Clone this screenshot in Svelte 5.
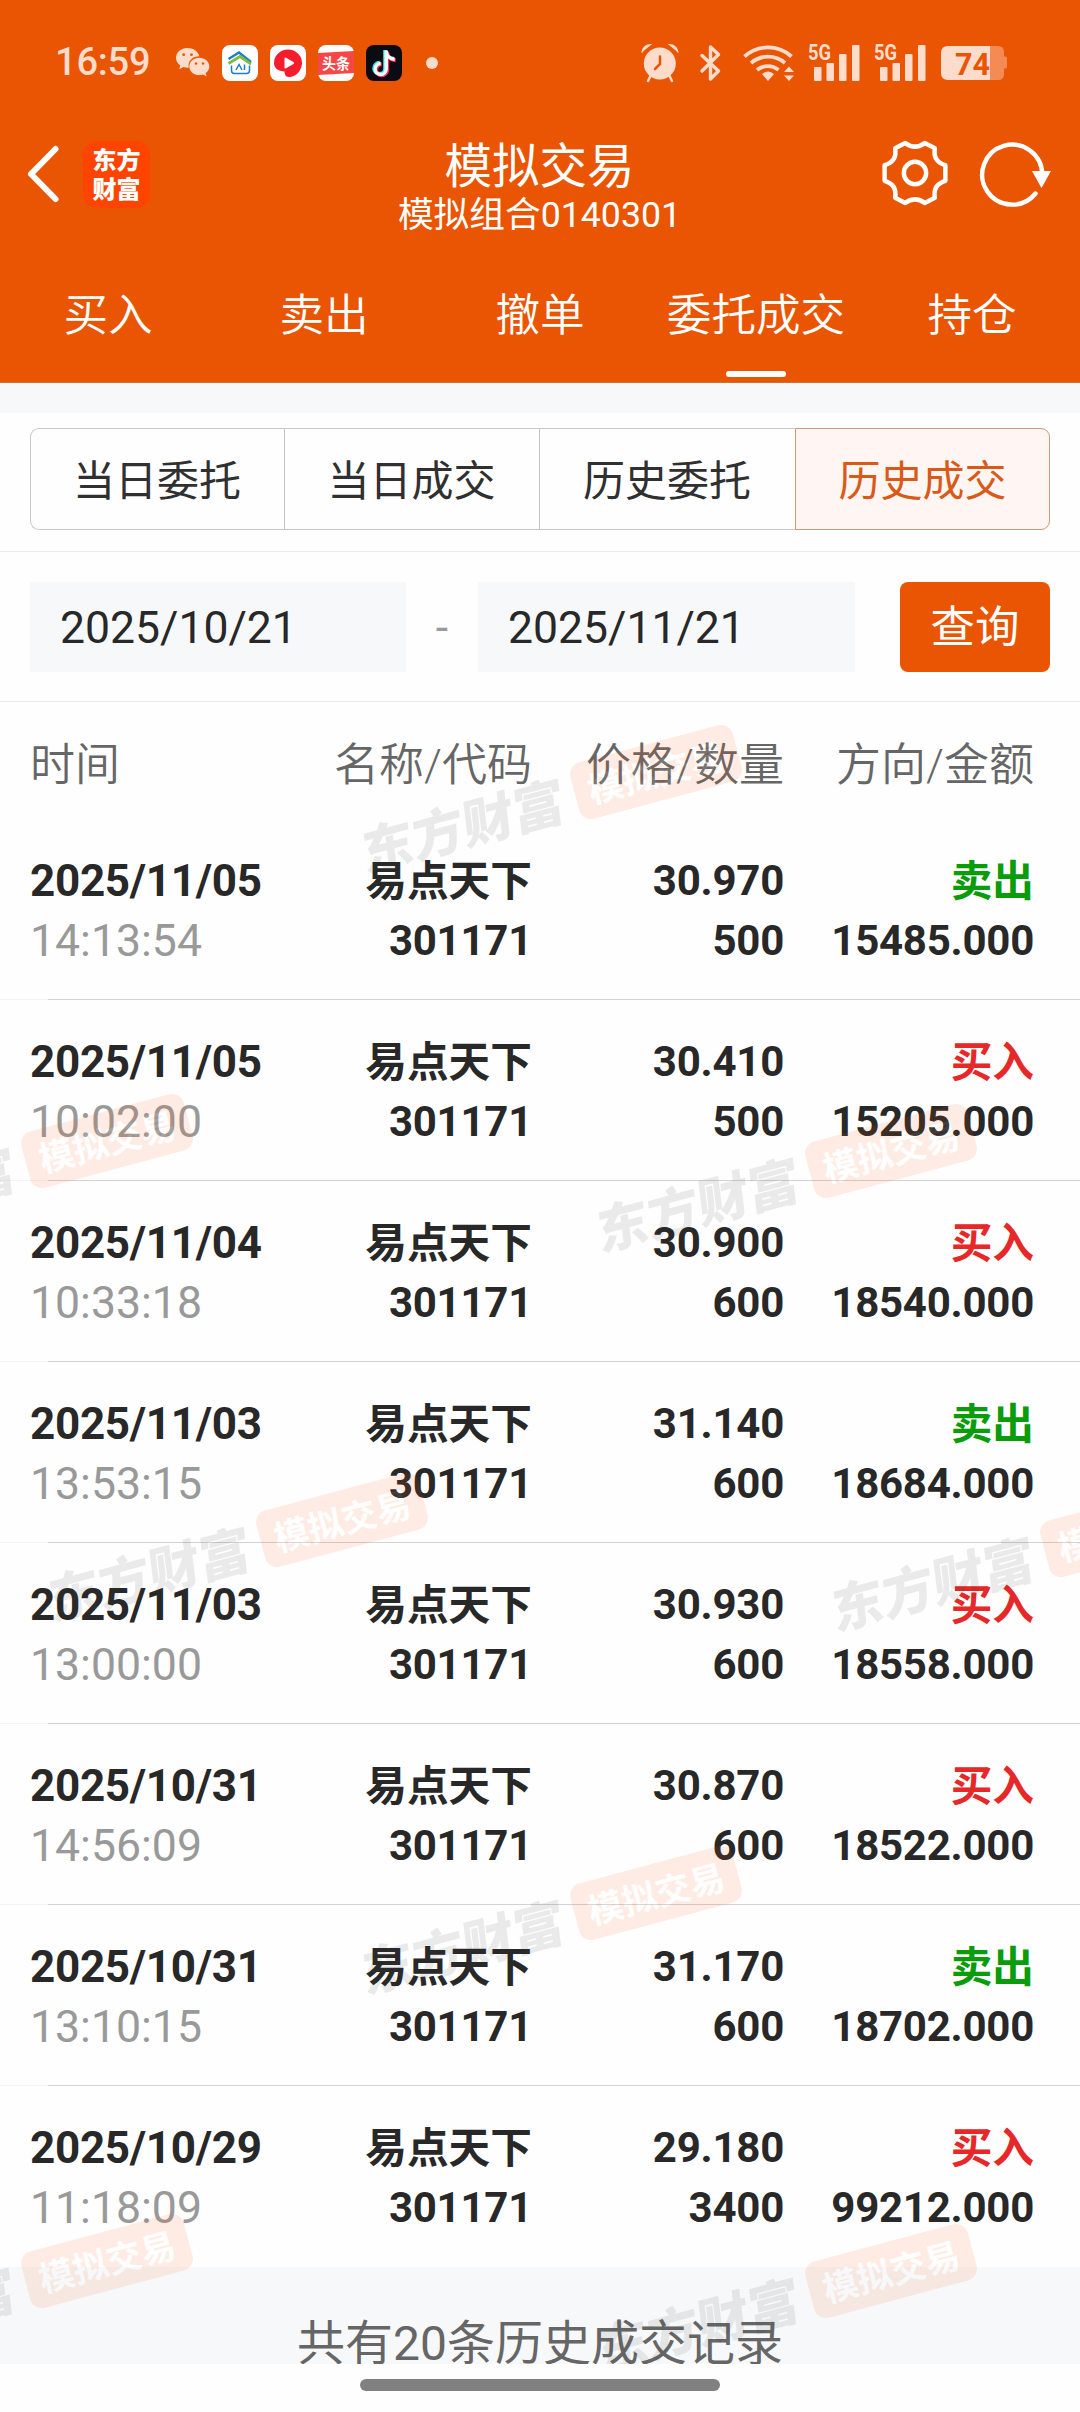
<script lang="ts">
	type Side = 'buy' | 'sell'

	interface Deal {
		date: string
		time: string
		name: string
		code: string
		price: string
		amount: string
		side: Side
		total: string
	}

	const tabs = ['买入', '卖出', '撤单', '委托成交', '持仓']
	const segments = ['当日委托', '当日成交', '历史委托', '历史成交']
	const columns = ['时间', '名称/代码', '价格/数量', '方向/金额']

	let activeTab = $state(3)
	let activeSegment = $state(3)

	function deal (date: string, time: string, price: string, amount: string, side: Side, total: string): Deal {
		return { date, time, name: '易点天下', code: '301171', price, amount, side, total }
	}

	const deals: Deal[] = [
		deal('2025/11/05', '14:13:54', '30.970', '500', 'sell', '15485.000'),
		deal('2025/11/05', '10:02:00', '30.410', '500', 'buy', '15205.000'),
		deal('2025/11/04', '10:33:18', '30.900', '600', 'buy', '18540.000'),
		deal('2025/11/03', '13:53:15', '31.140', '600', 'sell', '18684.000'),
		deal('2025/11/03', '13:00:00', '30.930', '600', 'buy', '18558.000'),
		deal('2025/10/31', '14:56:09', '30.870', '600', 'buy', '18522.000'),
		deal('2025/10/31', '13:10:15', '31.170', '600', 'sell', '18702.000'),
		deal('2025/10/29', '11:18:09', '29.180', '3400', 'buy', '99212.000')
	]

	// centre of each stamp's badge on the page
	const stamps = [
		[656, 771],
		[107, 1140],
		[891, 1150],
		[342, 1519],
		[1126, 1529],
		[656, 1892],
		[107, 2260],
		[891, 2270]
	]
</script>

{#snippet signal()}
	<svg class="signal" width="53" height="38" viewBox="0 0 53 38">
		<text x="0" y="16" textLength="23" lengthAdjust="spacingAndGlyphs">5G</text>
		<rect x="6" y="23" width="7.500" height="14" rx="1" />
		<rect x="18.500" y="19" width="7.500" height="18" rx="1" />
		<rect x="31" y="10" width="7.500" height="27" rx="1" />
		<rect x="44" y="1" width="7.500" height="36" rx="1" />
	</svg>
{/snippet}

<div class="page">
	<header>
		<div class="status">
			<span class="clock">16:59</span>
			<svg class="wechat" width="34" height="30" viewBox="0 0 34 30">
				<path d="M11.500 0C5 0 0 4.300 0 9.800c0 3.200 1.700 5.900 4.300 7.700L3.200 21.300l4.300-2.200c1.800.5 3.600.7 5.300.5C11.300 13 17 8.200 23.300 8.300 22.200 3.500 17.300 0 11.500 0z" />
				<path d="M23.300 9.700c-5.600 0-10 3.900-10 8.700s4.400 8.700 10 8.700c1.300 0 2.600-.2 3.700-.6l3.600 2-.9-3.400c2.200-1.600 3.600-4 3.600-6.700 0-4.800-4.500-8.700-10-8.700z" />
				<g fill="#ea5504">
					<circle cx="7.700" cy="6.700" r="1.400" />
					<circle cx="15.500" cy="6.700" r="1.400" />
					<circle cx="20" cy="15.500" r="1.200" />
					<circle cx="27" cy="15.500" r="1.200" />
				</g>
			</svg>
			<svg class="app" width="36" height="36" viewBox="0 0 36 36">
				<rect width="36" height="36" rx="8" fill="#fff" />
				<path d="M6.500 14 17 7.500 29 17" fill="none" stroke="#1b7fc4" stroke-width="2.300" />
				<path d="M6.500 18.500 18 11.500l11 7.500" fill="none" stroke="#7cbd42" stroke-width="2.800" />
				<path d="M9.500 20.500v5q0 3 3 3h12q3 0 3-3v-5" fill="none" stroke="#1b7fc4" stroke-width="1.500" />
				<path d="m14 25 3-5.500 3 5.500M22.500 19.500V25" fill="none" stroke="#1b7fc4" stroke-width="1.500" />
			</svg>
			<svg class="app" width="36" height="36" viewBox="0 0 36 36">
				<rect width="36" height="36" rx="8" fill="#fff" />
				<path d="M18 4.500a14 13.500 0 0 1 14 13.500c0 6-4.500 13-11.500 14-4 .6-6-1.500-6-5.500-6-.5-10.500-3-10.500-8.500a14 13.500 0 0 1 14-13.500z" fill="#f51d2c" />
				<path d="M14.500 13.500v9q0 1.500 1.500.8l7.500-4.400q1.300-.9 0-1.800L16 12.700q-1.500-.9-1.500.8z" fill="#fff" />
			</svg>
			<svg class="app" width="36" height="36" viewBox="0 0 36 36">
				<rect width="36" height="36" rx="8" fill="#fff" />
				<path d="M0 8 36 6v22L0 30z" fill="#f84646" />
				<text class="toutiao" x="4" y="23.500" textLength="28" lengthAdjust="spacingAndGlyphs">头条</text>
			</svg>
			<svg class="app" width="36" height="36" viewBox="0 0 36 36">
				<rect width="36" height="36" rx="8" fill="#0b0b14" />
				<g fill="none" stroke-width="4">
					<path d="M19.200 5v18.500a5.500 5.500 0 1 1-5.500-5.700M19.200 6c.5 4.500 4 7.500 8.500 7.800" stroke="#25f4ee" />
					<path d="M21.200 6.500V25a5.500 5.500 0 1 1-5.500-5.700M21.200 7.500c.5 4.500 4 7.500 8.500 7.800" stroke="#fe2c55" />
					<path d="M20.200 5.500v18.700a5.500 5.500 0 1 1-5.500-5.700M20.200 6.500c.5 4.500 4 7.500 8.500 7.800" stroke="#fff" stroke-width="3.400" />
				</g>
			</svg>
			<span class="more"></span>

			<svg class="alarm" width="38" height="39" viewBox="0 0 38 39">
				<circle cx="18.800" cy="20.500" r="16" />
				<path d="M0.500 9.500C1 4 5.500.5 11 1c-1 1.500-7.500 5.500-9.500 8.500-.5.500-1 .5-1 0zM37.500 9.500C37 4 32.500.5 27 1c1 1.500 7.500 5.500 9.500 8.500.5.500 1 .5 1 0z" />
				<path d="m9.500 33-2.500 5M28.500 33l2.500 5" fill="none" stroke="#fddccb" stroke-width="2.500" stroke-linecap="round" />
				<path d="M19 13.500v7.500l-5 5" fill="none" stroke="#ea5504" stroke-width="2.500" stroke-linecap="round" />
			</svg>
			<svg class="bluetooth" width="22" height="38" viewBox="0 0 22 38">
				<path d="m2 11.500 16.500 15.500L10.500 35V3l8 7.500L2 27" fill="none" stroke="#fddccb" stroke-width="3.400" stroke-linecap="round" stroke-linejoin="round" />
			</svg>
			<svg class="wifi" width="52" height="38" viewBox="0 0 52 38">
				<g fill="none" stroke="#fddccb" stroke-width="3.800">
					<path d="M1.500 12.500a35 35 0 0 1 47 0" />
					<path d="M8 19a26 26 0 0 1 34 0" />
					<path d="M14 26a17 17 0 0 1 21.500 0" />
				</g>
				<path d="M19 30q6-5 12 0l-6 7z" />
				<path d="m41 28 5-5.500 5 5.500zM41 31.500l5 5.500 5-5.500z" />
			</svg>
			{@render signal()}
			{@render signal()}
			<svg class="battery" width="67" height="36" viewBox="0 0 67 36">
				<path d="M49 1h8q6 0 6 6v4.500h1.500q1.500 0 1.500 1.500v9q0 1.500-1.500 1.500H63V29q0 6-6 6h-8z" fill="#f48b55" />
				<path d="M7 1h42v34H7q-7 0-7-7V8q0-7 7-7z" />
				<text x="14" y="29.500" textLength="35" lengthAdjust="spacingAndGlyphs">74</text>
			</svg>
		</div>

		<div class="titlebar">
			<div class="left">
				<svg width="32" height="58" viewBox="0 0 32 58">
					<path d="M28.500 4 4 29l24.500 25" fill="none" stroke="#fff" stroke-width="6" stroke-linecap="round" stroke-linejoin="round" />
				</svg>
				<div class="logo"><span>东方</span><span>财富</span></div>
			</div>
			<div class="title">
				<h1>模拟交易</h1>
				<p>模拟组合0140301</p>
			</div>
			<div class="right">
				<svg width="66" height="66" viewBox="0 0 68 68" fill="none" stroke="#fff" stroke-width="4.600" stroke-linejoin="round">
					<path d="M24 3.200q10 7.300 20 0l10.500 5.300q-2.500 13.500 10.800 17.500v16q-13.300 4-10.800 17.500L44 64.800q-10-7.300-20 0l-10.500-5.300Q16 46 2.700 42V26Q16 22 13.500 8.500z" />
					<circle cx="34" cy="34" r="11.500" />
				</svg>
				<svg width="72" height="68" viewBox="0 0 72 68">
					<path d="M62.200 35A30 30 0 1 0 55.500 53.500" fill="none" stroke="#fff" stroke-width="4.400" stroke-linecap="round" />
					<path d="M52 31h19L61.500 48z" fill="#fff" />
				</svg>
			</div>
		</div>

		<nav>
			{#each tabs as tab, i}
				<button class="tab" class:active={i === activeTab} onclick={() => (activeTab = i)}>{tab}</button>
			{/each}
		</nav>
	</header>

	<main>
		<div class="segments">
			{#each segments as segment, i}
				<button class:active={i === activeSegment} onclick={() => (activeSegment = i)}>{segment}</button>
			{/each}
		</div>

		<div class="query">
			<div class="date">2025/10/21</div>
			<span class="dash">-</span>
			<div class="date">2025/11/21</div>
			<button>查询</button>
		</div>

		<div class="grid head">
			{#each columns as column}
				<span>{column}</span>
			{/each}
		</div>

		{#each deals as row}
			<div class="grid row">
				<div><b class="day">{row.date}</b><span class="time">{row.time}</span></div>
				<div><b class="cjk">{row.name}</b><b>{row.code}</b></div>
				<div><b>{row.price}</b><b>{row.amount}</b></div>
				<div><b class="cjk {row.side}">{row.side === 'buy' ? '买入' : '卖出'}</b><b>{row.total}</b></div>
			</div>
		{/each}

		<div class="summary">共有20条历史成交记录</div>
	</main>

	<div class="watermark">
		{#each stamps as [x, y]}
			<div class="stamp" style="left: {x}px; top: {y}px">
				<span class="brand">东方财富</span>
				<span class="badge">模拟交易</span>
			</div>
		{/each}
	</div>

	<div class="home"><span></span></div>
</div>

<style>
	:global(body) {
		margin: 0;
		background: #fefefe;
	}

	.page {
		position: relative;
		width: 1080px;
		height: 2412px;
		overflow: hidden;
		background: #fefefe;
		color: #282828;
		font-family: Roboto, 'Noto Sans CJK SC', sans-serif;
	}

	button {
		border: none;
		background: none;
		padding: 0;
		font: inherit;
		color: inherit;
	}

	svg {
		display: block;
		flex: none;
		overflow: visible;
	}

	header {
		box-sizing: border-box;
		height: 383px;
		background: #ea5504;
		border-bottom: 1px solid #d0702f;
		color: #fff;
	}

	.status {
		display: flex;
		align-items: center;
		height: 125px;
		padding-left: 55px;
		fill: #fddccb;
		color: #fddccb;
	}

	.clock {
		width: 121px;
		padding-bottom: 1px;
		font-size: 38px;
		font-weight: 500;
		letter-spacing: -0.2px;
	}

	.wechat {
		margin: 1px 12px 0 0;
	}

	.app {
		margin-right: 12px;
	}

	.toutiao {
		fill: #fff;
		font: 700 15px 'Noto Sans CJK SC', sans-serif;
	}

	.more {
		width: 12px;
		height: 12px;
		margin-left: 12px;
		border-radius: 50%;
		background: #fddccb;
	}

	.alarm {
		margin-left: 203px;
	}

	.bluetooth {
		margin-left: 21px;
	}

	.wifi {
		margin: 0 13px 0 21px;
	}

	.signal {
		margin-right: 13px;
	}

	.signal text {
		font: 700 22px Roboto, sans-serif;
	}

	.battery {
		margin-left: 1px;
	}

	.battery text {
		fill: #ea5504;
		font: 700 32px Roboto, sans-serif;
	}

	.titlebar {
		display: grid;
		grid-template-columns: 1fr auto 1fr;
		grid-template-rows: 98px;
		align-items: center;
		height: 98px;
		padding: 0 28px 0 27px;
	}

	.left {
		display: flex;
		align-items: center;
		gap: 24px;
	}

	.logo {
		display: flex;
		flex-direction: column;
		box-sizing: border-box;
		width: 67px;
		height: 67px;
		padding-top: 3px;
		border-radius: 14px;
		background: #ff4400;
		font: 900 24px/29px 'Noto Sans CJK SC', sans-serif;
		text-align: center;
	}

	.title {
		align-self: start;
		margin-top: 15px;
		text-align: center;
	}

	h1 {
		margin: 0;
		font-size: 47.5px;
		font-weight: 400;
		line-height: 54px;
	}

	p {
		margin: 0;
		font-size: 35.7px;
		line-height: 43px;
	}

	.right {
		display: flex;
		justify-content: flex-end;
		gap: 32px;
	}

	nav {
		display: grid;
		grid-template-columns: repeat(5, 1fr);
		height: 159px;
	}

	.tab {
		position: relative;
		padding-top: 18px;
		font-size: 44.6px;
		font-weight: 350;
	}

	.tab.active::after {
		content: '';
		position: absolute;
		left: 78px;
		bottom: 5px;
		width: 60px;
		height: 6px;
		border-radius: 3px;
		background: #fff;
	}

	main {
		height: 1981px;
		overflow: hidden;
		border-top: 30px solid #f7f8fa;
		box-sizing: border-box;
	}

	.segments {
		display: grid;
		grid-template-columns: 254px 255px 256px 255px;
		height: 102px;
		padding: 15px 30px 21px;
		border-bottom: 1px solid #ebebeb;
	}

	.segments button {
		padding: 0 1px 3px 0;
		border: 1px solid #c8c8c8;
		border-right: none;
		color: #303030;
		font-size: 42px;
	}

	.segments button:first-child {
		border-radius: 9px 0 0 9px;
	}

	.segments button:last-child {
		padding-right: 0;
		border-right: 1px solid #c8c8c8;
		border-radius: 0 9px 9px 0;
	}

	.segments button.active {
		border-color: #cb9b7b;
		background: #fff5f2;
		color: #d95a18;
	}

	.query {
		display: flex;
		height: 90px;
		padding: 30px 30px 29px;
		border-bottom: 1px solid #ebebeb;
		font-size: 44.5px;
		line-height: 92px;
	}

	.date {
		box-sizing: border-box;
		width: 376px;
		padding-left: 30px;
		background: #f7f8fa;
	}

	.dash {
		width: 72px;
		color: #999;
		text-align: center;
	}

	.dash + .date {
		width: 377px;
	}

	.query button {
		width: 150px;
		margin-left: 45px;
		border-radius: 8px;
		background: #ea5504;
		color: #fff;
	}

	.grid {
		display: grid;
		grid-template-columns: 260px 242px 252px 250px;
		padding-left: 30px;
		text-align: right;
	}

	.grid > :first-child {
		text-align: left;
	}

	.head {
		height: 117px;
		color: #666;
		font-size: 45px;
		font-weight: 350;
		line-height: 128px;
	}

	.row {
		height: 150px;
		padding-top: 31px;
		background: linear-gradient(90deg, #f4f4f4 48px, #d2d2d2 48px) bottom / 100% 1px no-repeat;
	}

	.row:nth-last-child(2) {
		background: none;
	}

	.row b,
	.row span {
		display: block;
		height: 60px;
		font-size: 42px;
		font-weight: 700;
		letter-spacing: -0.25px;
		line-height: 62px;
	}

	.row .cjk {
		font-size: 41.7px;
		letter-spacing: 0;
		line-height: 63px;
	}

	.row .day {
		font-size: 44px;
		letter-spacing: -0.3px;
	}

	.row .time {
		color: #999;
		font-size: 44.6px;
		font-weight: 400;
		letter-spacing: 0;
	}

	.row .sell {
		color: #0a9c0a;
	}

	.row .buy {
		color: #e62828;
	}

	.summary {
		height: 98px;
		background: #f7f8fa;
		color: #666;
		font-size: 48px;
		line-height: 154px;
		text-align: center;
	}

	.watermark {
		position: absolute;
		inset: 383px 0 48px;
		overflow: hidden;
		pointer-events: none;
	}

	.stamp {
		position: absolute;
		display: flex;
		align-items: center;
		width: 400px;
		height: 64px;
		margin: -414px 0 0 -302px;
		opacity: 0.1;
		transform: rotate(-15deg);
		transform-origin: 302px 32px;
		white-space: nowrap;
	}

	.brand {
		width: 220px;
		margin-left: -2px;
		color: #444;
		font: 900 52px/64px 'Noto Sans CJK SC', sans-serif;
		transform: skewX(-8deg);
	}

	.badge {
		box-sizing: border-box;
		width: 168px;
		height: 58px;
		border-radius: 12px;
		background: #ff5a10;
		color: #fff;
		font: 700 35px/56px 'Noto Sans CJK SC', sans-serif;
		text-align: center;
	}

	.home {
		display: flex;
		justify-content: center;
		padding-top: 15px;
	}

	.home span {
		width: 360px;
		height: 12px;
		border-radius: 6px;
		background: #808080;
	}
</style>
